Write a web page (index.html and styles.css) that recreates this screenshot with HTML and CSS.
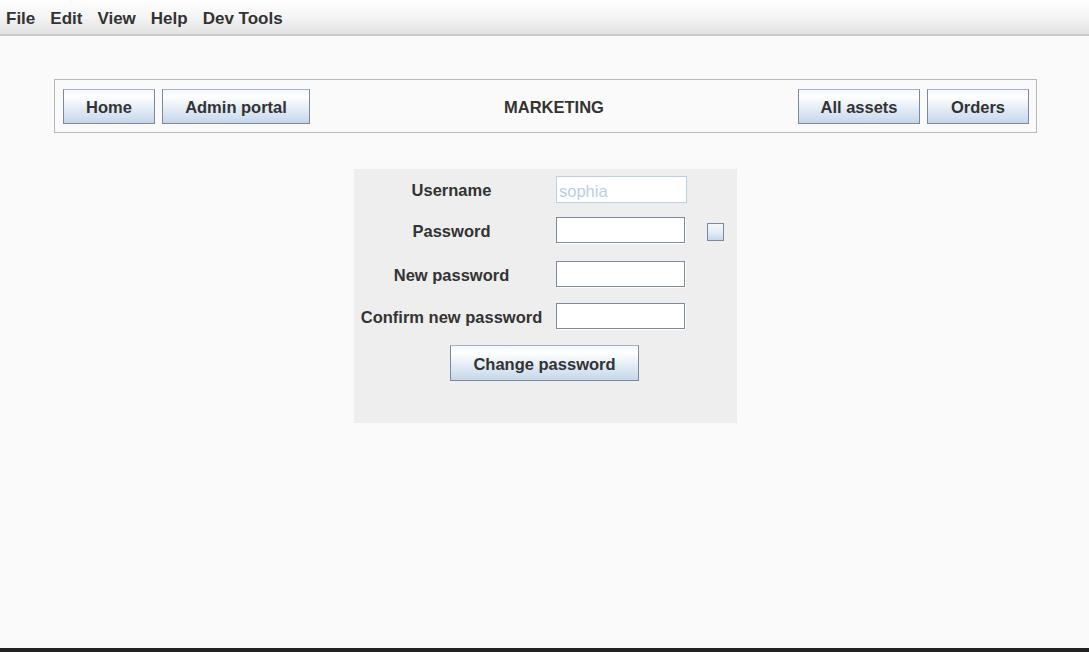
FILE: index.html
```html
<!DOCTYPE html>
<html>
<head>
<meta charset="utf-8">
<link rel="stylesheet" href="styles.css">
</head>
<body>
<div class="menubar">
  <span class="menu">File</span>
  <span class="menu">Edit</span>
  <span class="menu">View</span>
  <span class="menu">Help</span>
  <span class="menu">Dev Tools</span>
</div>
<div class="content">
  <div class="nav">
    <button class="btn nav-home">Home</button>
    <button class="btn nav-admin">Admin portal</button>
    <div class="title">MARKETING</div>
    <button class="btn nav-assets">All assets</button>
    <button class="btn nav-orders">Orders</button>
  </div>
  <div class="form">
    <div class="row r1">
      <div class="label">Username</div>
      <div class="input wide placeholder">sophia</div>
    </div>
    <div class="row r2">
      <div class="label">Password</div>
      <div class="input"></div>
      <div class="check"></div>
    </div>
    <div class="row r3">
      <div class="label">New password</div>
      <div class="input"></div>
    </div>
    <div class="row r4">
      <div class="label">Confirm new password</div>
      <div class="input"></div>
    </div>
    <div class="actions">
      <button class="btn change">Change password</button>
    </div>
  </div>
</div>
<div class="bottom-strip"></div>
</body>
</html>
```

FILE: styles.css
```css
* { box-sizing: border-box; }
html, body {
  margin: 0;
  padding: 0;
  height: 100%;
}
body {
  background: #fafafa;
  font-family: "Liberation Sans", Arial, sans-serif;
  font-weight: bold;
  font-size: 16.5px;
  color: #333333;
  display: flex;
  flex-direction: column;
  overflow: hidden;
}
.menubar {
  height: 36px;
  background: linear-gradient(#ffffff 0%, #f4f4f4 50%, #e2e2e2 100%);
  border-bottom: 2px solid #c9c9c9;
  display: flex;
  align-items: center;
  padding-left: 6px;
  padding-top: 4px;
  font-size: 17px;
}
.menu {
  margin-right: 15px;
  color: #333333;
}
.content {
  flex: 1;
  padding: 43px 51px 0 54px;
}
.nav {
  width: 983px;
  height: 54px;
  border: 1px solid #b8b8b8;
  display: flex;
  align-items: center;
  padding: 0 7px 0 8px;
  gap: 7px;
}
.btn {
  font-family: "Liberation Sans", Arial, sans-serif;
  font-weight: bold;
  font-size: 16.5px;
  color: #333333;
  height: 35px;
  border: 1px solid #7a8a9c;
  border-top-color: #a3b3c4;
  background: linear-gradient(#f3f6fa 0%, #ffffff 20%, #e4edf6 55%, #c6d7ea 100%);
  padding: 3px 0 0 0;
  margin: 0;
}
.nav-home { width: 92px; }
.nav-admin { width: 148px; }
.nav-assets { width: 122px; }
.nav-orders { width: 102px; }
.title {
  flex: 1;
  text-align: center;
  padding-top: 3px;
}
.form {
  width: 383px;
  height: 254px;
  margin: 36px 0 0 300px;
  background: #eeeeee;
  padding-top: 7px;
}
.row {
  display: flex;
  align-items: center;
  height: 26px;
}
.r2 { margin-top: 15px; }
.r3 { margin-top: 18px; }
.r4 { margin-top: 16px; }
.label {
  width: 195px;
  text-align: center;
  margin-right: 7px;
  padding-top: 3px;
}
.input {
  width: 129px;
  height: 26px;
  background: #ffffff;
  border: 1px solid #7c8a99;
  box-shadow: 1px 1px 0 #ffffff;
}
.input.wide {
  width: 131px;
  height: 27px;
  border: 1px solid #b8cfe5;
  box-shadow: none;
}
.placeholder {
  color: #b8cfe5;
  font-weight: normal;
  font-size: 16.5px;
  padding-left: 2px;
  padding-top: 2px;
  line-height: 24px;
}
.check {
  width: 17px;
  height: 18px;
  margin-left: 22px;
  margin-top: 3px;
  border: 1px solid #7a8a9c;
  background: linear-gradient(#f3f6fa 0%, #e4edf6 50%, #c6d7ea 100%);
}
.actions {
  margin-top: 16px;
  display: flex;
  justify-content: center;
  padding-right: 2px;
}
.change {
  width: 189px;
  height: 36px;
}
.bottom-strip {
  height: 4px;
  background: #222222;
}
```
